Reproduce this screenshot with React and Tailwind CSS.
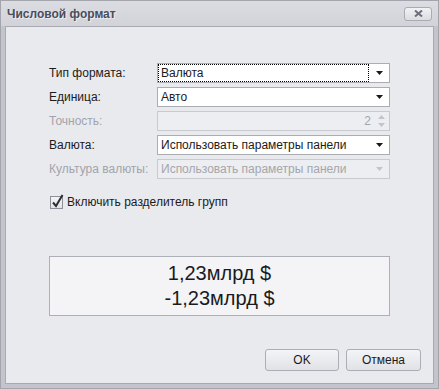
import React from "react";

const Arrow = ({ color = "#1a1a1a" }) => (
  <svg width="7" height="4" viewBox="0 0 7 4"><path d="M0 0H7L3.5 4Z" fill={color} /></svg>
);

function Combo({ value, focus, disabled }) {
  return (
    <div className={`h-[20px] flex items-center border ${disabled ? "border-[#c9cad0] bg-[#eceef1] text-[#a5a6ad]" : "border-[#abadb3] bg-white text-[#1b1b1b]"}`}>
      <div className="flex-1 h-full flex items-center px-[1px]">
        <span className={`px-[2px] leading-[16px] h-[16px] flex-1 ${focus ? "outline outline-1 outline-dotted outline-black" : ""}`}>{value}</span>
      </div>
      <div className="w-[20px] flex justify-center"><Arrow color={disabled ? "#c3c4ca" : "#1a1a1a"} /></div>
    </div>
  );
}

function Row({ label, disabled, children }) {
  return (
    <div className="flex items-center h-[20px]">
      <div className={`w-[108px] ${disabled ? "text-[#a3a4ab]" : "text-[#1b1b1b]"}`}>{label}</div>
      <div className="flex-1">{children}</div>
    </div>
  );
}

export default function App() {
  return (
    <div className="w-[439px] h-[389px] bg-[#c3c4cc] border border-[#a3a4ac] flex flex-col px-[4px] pb-[4px] text-[12px]" style={{ fontFamily: '"Liberation Sans", Arial, sans-serif' }}>
      <div className="h-[25px] flex items-center justify-between bg-gradient-to-b from-[#dcdde2] to-[#d2d3d9] -mx-[4px] pl-[6px] pr-[6px]">
        <span className="font-bold text-[12px] text-[#4b4c5c]" style={{ textShadow: "1px 1px 0 rgba(255,255,255,0.6)" }}>Числовой формат</span>
        <div className="w-[28px] h-[14px] rounded-[3px] border border-[#a9aab2] bg-gradient-to-b from-[#f1f2f4] to-[#dcdde2] flex items-center justify-center">
          <svg width="9" height="7" viewBox="0 0 9 7"><path d="M1 0.5L8 6.5M8 0.5L1 6.5" stroke="#6d6e78" strokeWidth="2" /></svg>
        </div>
      </div>
      <div className="flex-1 bg-[#e9eaee] border border-[#a8a9b1] flex flex-col pl-[43px] pr-[43px] pt-[36px]">
        <div className="flex flex-col gap-[4px]">
          <Row label="Тип формата:"><Combo value="Валюта" focus /></Row>
          <Row label="Единица:"><Combo value="Авто" /></Row>
          <Row label="Точность:" disabled>
            <div className="h-[20px] flex items-center border border-[#c9cad0] bg-[#eceef1] text-[#a5a6ad]">
              <span className="flex-1 text-right pr-[4px]">2</span>
              <div className="w-[14px] flex flex-col items-center gap-[4px] pr-[2px]">
                <svg width="7" height="4" viewBox="0 0 7 4"><path d="M0 4H7L3.5 0Z" fill="#c3c4ca" /></svg>
                <svg width="7" height="4" viewBox="0 0 7 4"><path d="M0 0H7L3.5 4Z" fill="#c3c4ca" /></svg>
              </div>
            </div>
          </Row>
          <Row label="Валюта:"><Combo value="Использовать параметры панели" /></Row>
          <Row label="Культура валюты:" disabled><Combo value="Использовать параметры панели" disabled /></Row>
        </div>
        <div className="flex items-center mt-[14px] ml-[1px] gap-[4px]">
          <div className="w-[13px] h-[13px] border border-[#8e8f99] bg-gradient-to-b from-[#f4f4f6] to-[#e2e3e8] relative">
            <svg className="absolute -top-[3px] left-[0px]" width="13" height="15" viewBox="0 0 13 15"><path d="M2 8.5L5 12L11.5 1" stroke="#2c2d35" strokeWidth="2" fill="none" /></svg>
          </div>
          <span className="text-[#1b1b1b]">Включить разделитель групп</span>
        </div>
        <div className="mt-[45px] h-[60px] border border-[#aeb0b8] bg-[#f4f4f6] flex flex-col items-center justify-center text-[20px] leading-[25px] text-[#1a1a22]">
          <div>1,23млрд $</div>
          <div>-1,23млрд $</div>
        </div>
        <div className="flex-1" />
        <div className="flex justify-end gap-[7px] -mr-[31px] mb-[12px]">
          <button className="w-[74px] h-[22px] rounded-[3px] border border-[#acadb5] bg-gradient-to-b from-[#f3f4f6] to-[#e1e2e7] text-[#1b1b1b]">OK</button>
          <button className="w-[75px] h-[22px] rounded-[3px] border border-[#acadb5] bg-gradient-to-b from-[#f3f4f6] to-[#e1e2e7] text-[#1b1b1b]">Отмена</button>
        </div>
      </div>
    </div>
  );
}
